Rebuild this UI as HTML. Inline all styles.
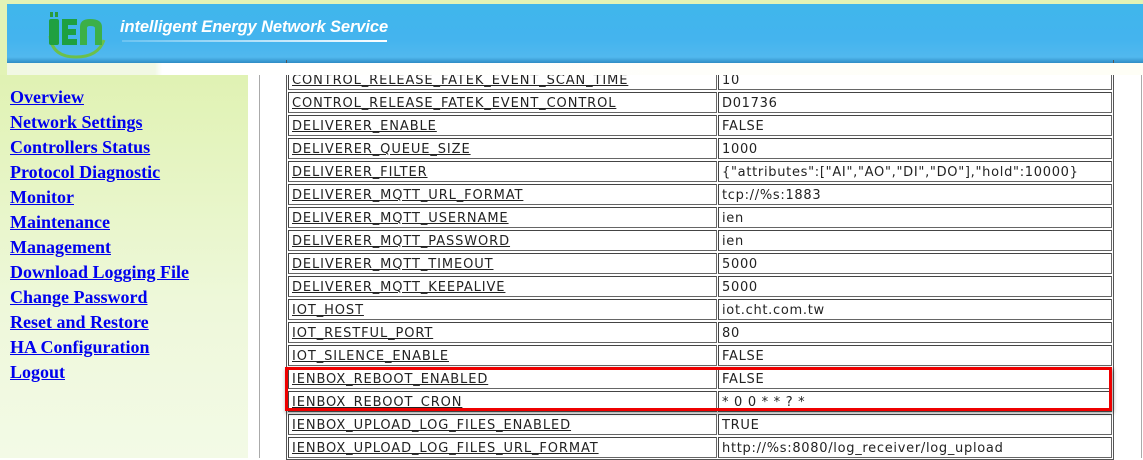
<!DOCTYPE html>
<html><head><meta charset="utf-8"><style>
*{margin:0;padding:0;box-sizing:border-box}
body{width:1143px;height:458px;overflow:hidden;background:#fff;position:relative;font-family:"DejaVu Sans",Verdana,sans-serif}
#top{position:absolute;left:0;top:0;width:1143px;height:75px;background:#e2f3b6}
#banner{position:absolute;left:7px;top:4px;width:1136px;height:59px;background:linear-gradient(180deg,#3fb6ec 0%,#44b4ee 60%,#51b8ee 90%,#2f8cc4 100%)}
#title{position:absolute;left:120px;top:18px;color:#fff;font:italic bold 16.5px "Liberation Sans",sans-serif;letter-spacing:-.1px}
#line{position:absolute;left:122px;top:40px;width:265px;height:2px;background:linear-gradient(90deg,rgba(255,255,255,.2),#fff)}
#nav{position:absolute;left:0;top:75px;width:248px;height:383px;background:linear-gradient(180deg,#e0f2b3,#eef8da 60%,#f3fae6)}
#nav a{display:block;position:absolute;left:10px;font:bold 18px "Liberation Serif",serif;color:#0000ee;text-decoration:underline}
#vl{position:absolute;left:259px;top:75px;width:1px;height:383px;background:#aaa}
#vr{position:absolute;left:1141px;top:75px;width:1px;height:383px;background:#aaa}
.r{position:absolute;left:286px;height:21px}
.c1,.c2{position:absolute;top:0;height:21px;border:1px solid #444;border-right-color:#666;border-bottom-color:#666;font-size:13px;line-height:21px;color:#222;padding-left:3px;white-space:nowrap;overflow:hidden;letter-spacing:.9px}
.c1{left:2px;width:429px;text-decoration:underline}
.c2{left:432px;width:394px;letter-spacing:.7px}
#outer{position:absolute;left:286px;top:60px;width:828px;height:400px;border:1px solid #555;border-top:none}
#red{position:absolute;left:285px;top:367px;width:827px;height:44px;border:3px solid #e00;box-shadow:1px 2px 4px rgba(0,0,0,.45)}
</style></head><body>
<div id="top"></div>
<div id="banner"></div>
<svg style="position:absolute;left:46px;top:10px" width="64" height="50" viewBox="0 0 64 50">
<path d="M4 26 Q6 47 30 47 Q52 47 58 30" fill="none" stroke="#6cc04a" stroke-width="3"/>
<rect x="4" y="2" width="3" height="5" fill="#2a9a3a"/><rect x="9" y="2" width="3" height="5" fill="#2a9a3a"/>
<rect x="3" y="9" width="10" height="26" rx="2" fill="#20a040"/>
<path d="M16 9 h15 v6 h-9 v4 h8 v6 h-8 v4 h9 v6 h-15z" fill="#1ea040"/>
<path d="M34 35 V17 Q34 9 44 9 Q56 9 56 17 V35 h-7 V18 Q49 16 44 16 Q41 16 41 18 V35z" fill="#3cb048"/>
</svg>
<div id="title">intelligent Energy Network Service</div>
<div id="line"></div>
<div id="nav">
<a style="top:12px">Overview</a>
<a style="top:37px">Network Settings</a>
<a style="top:62px">Controllers Status</a>
<a style="top:87px">Protocol Diagnostic</a>
<a style="top:112px">Monitor</a>
<a style="top:137px">Maintenance</a>
<a style="top:162px">Management</a>
<a style="top:187px">Download Logging File</a>
<a style="top:212px">Change Password</a>
<a style="top:237px">Reset and Restore</a>
<a style="top:262px">HA Configuration</a>
<a style="top:287px">Logout</a>
</div>
<div id="vl"></div><div id="vr"></div>
<div id="outer"></div>
<div class="r" style="top:69px"><div class="c1">CONTROL_RELEASE_FATEK_EVENT_SCAN_TIME</div><div class="c2">10</div></div>
<div class="r" style="top:92px"><div class="c1">CONTROL_RELEASE_FATEK_EVENT_CONTROL</div><div class="c2">D01736</div></div>
<div class="r" style="top:115px"><div class="c1">DELIVERER_ENABLE</div><div class="c2">FALSE</div></div>
<div class="r" style="top:138px"><div class="c1">DELIVERER_QUEUE_SIZE</div><div class="c2">1000</div></div>
<div class="r" style="top:161px"><div class="c1">DELIVERER_FILTER</div><div class="c2">{"attributes":["AI","AO","DI","DO"],"hold":10000}</div></div>
<div class="r" style="top:184px"><div class="c1">DELIVERER_MQTT_URL_FORMAT</div><div class="c2">tcp://%s:1883</div></div>
<div class="r" style="top:207px"><div class="c1">DELIVERER_MQTT_USERNAME</div><div class="c2">ien</div></div>
<div class="r" style="top:230px"><div class="c1">DELIVERER_MQTT_PASSWORD</div><div class="c2">ien</div></div>
<div class="r" style="top:253px"><div class="c1">DELIVERER_MQTT_TIMEOUT</div><div class="c2">5000</div></div>
<div class="r" style="top:276px"><div class="c1">DELIVERER_MQTT_KEEPALIVE</div><div class="c2">5000</div></div>
<div class="r" style="top:299px"><div class="c1">IOT_HOST</div><div class="c2">iot.cht.com.tw</div></div>
<div class="r" style="top:322px"><div class="c1">IOT_RESTFUL_PORT</div><div class="c2">80</div></div>
<div class="r" style="top:345px"><div class="c1">IOT_SILENCE_ENABLE</div><div class="c2">FALSE</div></div>
<div class="r" style="top:368px"><div class="c1">IENBOX_REBOOT_ENABLED</div><div class="c2">FALSE</div></div>
<div class="r" style="top:391px"><div class="c1">IENBOX_REBOOT_CRON</div><div class="c2">* 0 0 * * ? *</div></div>
<div class="r" style="top:414px"><div class="c1">IENBOX_UPLOAD_LOG_FILES_ENABLED</div><div class="c2">TRUE</div></div>
<div class="r" style="top:437px"><div class="c1">IENBOX_UPLOAD_LOG_FILES_URL_FORMAT</div><div class="c2">http://%s:8080/log_receiver/log_upload</div></div>
<div style="position:absolute;left:7px;top:63px;width:1136px;height:12px;background:linear-gradient(90deg,#f1f8e4 0,#f1f8e4 148px,#fff 155px,#fefef6 100%)"></div>
<div id="red"></div>
</body></html>
